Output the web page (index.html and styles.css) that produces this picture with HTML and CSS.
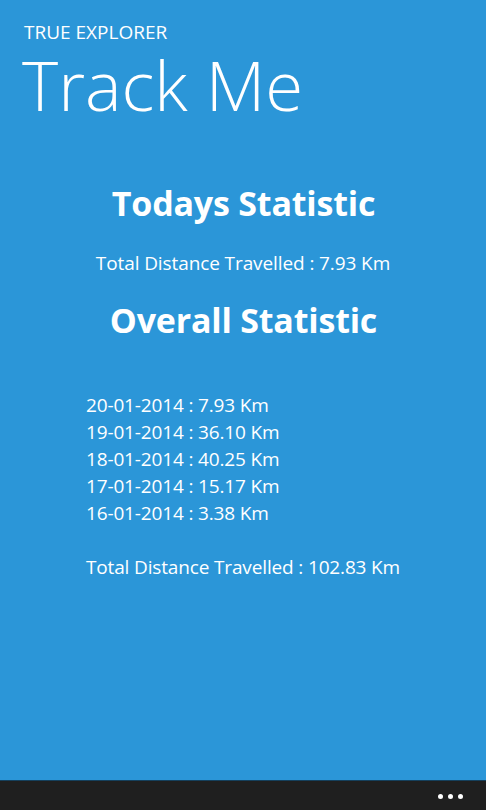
FILE: index.html
```html
<!DOCTYPE html>
<html>
<head>
<meta charset="utf-8">
<link rel="stylesheet" href="styles.css">
</head>
<body>
<div class="page">
  <header class="header">
    <div class="app-name">TRUE EXPLORER</div>
    <h1 class="title">Track Me</h1>
  </header>
  <main class="content">
    <h2 class="heading today">Todays Statistic</h2>
    <p class="today-total">Total Distance Travelled : 7.93 Km</p>
    <h2 class="heading overall">Overall Statistic</h2>
    <ul class="history">
      <li>20-01-2014 : 7.93 Km</li>
      <li>19-01-2014 : 36.10 Km</li>
      <li>18-01-2014 : 40.25 Km</li>
      <li>17-01-2014 : 15.17 Km</li>
      <li>16-01-2014 : 3.38 Km</li>
    </ul>
    <p class="overall-total">Total Distance Travelled : 102.83 Km</p>
  </main>
  <footer class="appbar">
    <div class="more"><span></span><span></span><span></span></div>
  </footer>
</div>
</body>
</html>
```
FILE: styles.css
```css
html, body {
  margin: 0;
  padding: 0;
}
body {
  background: #2b96d8;
  font-family: "Open Sans", "Noto Sans", sans-serif;
  color: #ffffff;
}
.page {
  width: 486px;
  height: 810px;
  display: flex;
  flex-direction: column;
}
.header {
  padding: 20px 0 0 24px;
}
.app-name {
  font-size: 19px;
  line-height: 24px;
  letter-spacing: 0;
}
.title {
  margin: 4px 0 4px -2px;
  font-weight: 300;
  font-size: 69px;
  line-height: 72px;
  letter-spacing: 0;
}
.content {
  flex: 1;
  display: flex;
  flex-direction: column;
}
.heading {
  margin: 0;
  font-weight: 700;
  font-size: 34px;
  text-align: center;
  letter-spacing: -0.2px;
  line-height: 44px;
  padding-left: 1px;
}
.today {
  margin-top: 57px;
}
.today-total {
  margin: 25px 0 0;
  text-align: center;
  font-size: 19px;
  line-height: 26px;
  letter-spacing: -0.1px;
  padding-left: 0;
}
.overall {
  margin-top: 22px;
}
.history {
  list-style: none;
  margin: 50px 0 0;
  padding: 0 0 0 86px;
}
.history li {
  font-size: 19px;
  line-height: 27px;
  letter-spacing: -0.15px;
}
.overall-total {
  margin: 27px 0 0 86px;
  font-size: 19px;
  line-height: 27px;
  letter-spacing: -0.15px;
}
.appbar {
  margin-top: auto;
  height: 30px;
  background: #1f1f1f;
  border-top: 1px solid #15405c;
  display: flex;
  justify-content: flex-end;
  align-items: center;
  padding-right: 23px;
  box-sizing: border-box;
}
.more {
  display: flex;
  gap: 5px;
  margin-top: 2px;
}
.more span {
  width: 5px;
  height: 5px;
  border-radius: 50%;
  background: #ffffff;
}
```
